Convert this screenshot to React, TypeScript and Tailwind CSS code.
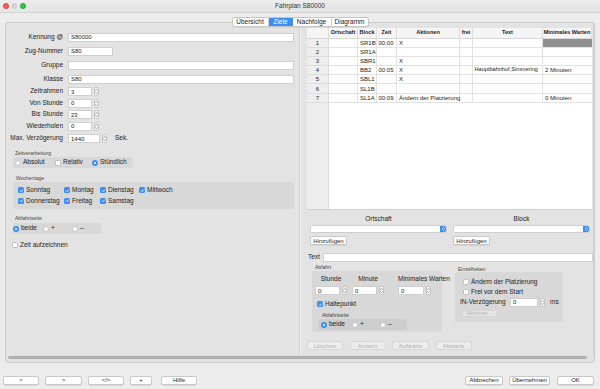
import React from 'react';

function Field({ w, value }: { w: string; value?: string }) {
  return (
    <div className={`h-[9px] bg-white border border-[#cfcfcf] flex items-center px-[2px] text-[6px] leading-none ${w}`}>
      {value}
    </div>
  );
}

function Stepper() {
  return (
    <div className="ml-[2px] w-[5px] h-[9px] bg-white border border-[#c4c4c4] rounded-[2px] flex flex-col items-center justify-center gap-[1px]">
      <svg width="3" height="2" viewBox="0 0 3 2">
        <path d="M0.2 1.8 L1.5 0.3 L2.8 1.8" fill="none" stroke="#666" strokeWidth="0.6" />
      </svg>
      <svg width="3" height="2" viewBox="0 0 3 2">
        <path d="M0.2 0.2 L1.5 1.7 L2.8 0.2" fill="none" stroke="#666" strokeWidth="0.6" />
      </svg>
    </div>
  );
}

function Check({ on, label }: { on?: boolean; label: string }) {
  return (
    <div className="flex items-center gap-[2px] whitespace-nowrap">
      {on ? (
        <div className="w-[6px] h-[6px] rounded-[1.5px] bg-[#3a8ef6] flex items-center justify-center">
          <svg width="5" height="5" viewBox="0 0 10 10">
            <path d="M2 5.2 L4.2 7.4 L8 2.8" fill="none" stroke="white" strokeWidth="1.6" />
          </svg>
        </div>
      ) : (
        <div className="w-[6px] h-[6px] rounded-[1.5px] bg-white border border-[#bdbdbd]" />
      )}
      <span>{label}</span>
    </div>
  );
}

function Radio({ on, label }: { on?: boolean; label: string }) {
  return (
    <div className="flex items-center gap-[2px] whitespace-nowrap">
      {on ? (
        <div className="w-[6px] h-[6px] rounded-full bg-[#3a8ef6] flex items-center justify-center">
          <div className="w-[2px] h-[2px] rounded-full bg-white" />
        </div>
      ) : (
        <div className="w-[6px] h-[6px] rounded-full bg-white border border-[#c4c4c4]" />
      )}
      <span>{label}</span>
    </div>
  );
}

function Btn({ label, w, disabled }: { label: string; w: string; disabled?: boolean }) {
  return (
    <div
      className={`h-[9px] flex items-center justify-center rounded-[2px] border text-[6px] leading-none ${w} ${
        disabled ? 'bg-[#ececec] border-[#d6d6d6] text-[#b2b2b2]' : 'bg-white border-[#c9c9c9] text-[#222] shadow-[0_0.5px_0.5px_rgba(0,0,0,0.15)]'
      }`}
    >
      {label}
    </div>
  );
}

function Combo() {
  return (
    <div className="h-[8px] flex-1 bg-white border border-[#cfcfcf] rounded-[1.5px] flex justify-end">
      <div className="w-[6px] h-full bg-[#3a8ef6] rounded-r-[1.5px] flex flex-col items-center justify-center gap-[0.5px]">
        <svg width="3" height="2" viewBox="0 0 3 2">
          <path d="M0.2 1.8 L1.5 0.3 L2.8 1.8" fill="none" stroke="white" strokeWidth="0.6" />
        </svg>
        <svg width="3" height="2" viewBox="0 0 3 2">
          <path d="M0.2 0.2 L1.5 1.7 L2.8 0.2" fill="none" stroke="white" strokeWidth="0.6" />
        </svg>
      </div>
    </div>
  );
}

function Row({ label, h, children }: { label: string; h: string; children: React.ReactNode }) {
  return (
    <div className={`flex items-center ${h}`}>
      <div className="w-[56px] flex justify-end whitespace-nowrap">{label}</div>
      <div className="ml-[5px] flex-1 flex items-center">{children}</div>
    </div>
  );
}

const rows = [
  { n: '1', block: 'SR1B', zeit: '00:00', akt: 'X', text: '', warten: '', sel: true },
  { n: '2', block: 'SR1A', zeit: '', akt: '', text: '', warten: '' },
  { n: '3', block: 'SBR1', zeit: '', akt: 'X', text: '', warten: '' },
  { n: '4', block: 'BB2', zeit: '00:05', akt: 'X', text: 'Hauptbahnhof,Simmering', warten: '2 Minuten' },
  { n: '5', block: 'SBL1', zeit: '', akt: 'X', text: '', warten: '' },
  { n: '6', block: 'SL1B', zeit: '', akt: '', text: '', warten: '' },
  { n: '7', block: 'SL1A', zeit: '00:09', akt: 'Ändern der Platzierung', text: '', warten: '0 Minuten' },
];

const cols = 'grid grid-cols-[22px_29px_19px_20px_63px_13px_70px_49px]';

function Table() {
  return (
    <div className="w-[285px] h-[182px] bg-white border-b border-[#cfcfcf] flex flex-col relative">
      <div className={`${cols} h-[10.5px] bg-[#f5f5f5] border-b border-[#d8d8d8] font-semibold text-[5.5px]`}>
        {['', 'Ortschaft', 'Block', 'Zeit', 'Aktionen', 'frei', 'Text', 'Minimales Warten'].map((c, i) => (
          <div key={i} className="flex items-center justify-center border-r border-[#dcdcdc] whitespace-nowrap overflow-hidden">
            {c}
          </div>
        ))}
      </div>
      {rows.map((r) => (
        <div key={r.n} className={`${cols} h-[9.2px] text-[6px]`}>
          <div className="flex items-center justify-center bg-[#eeeeee] border-r border-b border-[#dcdcdc]">{r.n}</div>
          <div className="border-r border-b border-[#e2e2e2]" />
          <div className="flex items-center px-[2px] border-r border-b border-[#e2e2e2]">{r.block}</div>
          <div className="flex items-center px-[1.5px] border-r border-b border-[#e2e2e2]">{r.zeit}</div>
          <div className="flex items-center px-[2px] border-r border-b border-[#e2e2e2] whitespace-nowrap">{r.akt}</div>
          <div className="border-r border-b border-[#e2e2e2]" />
          <div className="flex items-center px-[1.5px] border-r border-b border-[#e2e2e2] whitespace-nowrap overflow-hidden text-[5.6px]">{r.text}</div>
          <div className={`flex items-center px-[2px] border-b border-[#e2e2e2] whitespace-nowrap ${r.sel ? 'bg-[#8f8f8f]' : ''}`}>{r.warten}</div>
        </div>
      ))}
      <div className="flex-1 flex">
        <div className="w-[22px] bg-[#eeeeee] border-r border-[#dcdcdc]" />
        <div className="flex-1" />
      </div>
    </div>
  );
}

export default function App() {
  return (
    <div className="w-[600px] h-[389px] bg-[#ececec] flex flex-col overflow-hidden text-[6.5px] leading-none text-[#222] font-['Liberation_Sans',Arial,sans-serif]">
      {/* title bar */}
      <div className="h-[13px] relative flex items-center bg-gradient-to-b from-[#ededed] to-[#e4e4e4] border-b border-[#d3d3d3]">
        <div className="flex items-center gap-[3px] pl-[3px]">
          <div className="w-[5.5px] h-[5.5px] rounded-full bg-[#fc5f58] border-[0.5px] border-[#e0443e]" />
          <div className="w-[5.5px] h-[5.5px] rounded-full bg-[#d6d6d6] border-[0.5px] border-[#c6c6c6]" />
          <div className="w-[5.5px] h-[5.5px] rounded-full bg-[#2ec842] border-[0.5px] border-[#1dac2c]" />
        </div>
        <div className="absolute inset-0 flex items-center justify-center text-[6.5px] text-[#333]">Fahrplan S80000</div>
      </div>

      {/* tabs */}
      <div className="mt-[4px] h-[10px] flex justify-center relative z-10">
        <div className="flex h-full bg-white border border-[#c6c6c6] rounded-[2.5px] overflow-hidden text-[6.5px] shadow-[0_0.5px_0.5px_rgba(0,0,0,0.1)]">
          <div className="w-[36px] flex items-center justify-center border-r border-[#d4d4d4]">Übersicht</div>
          <div className="w-[24px] flex items-center justify-center bg-[#3b8ef5] text-white">Ziele</div>
          <div className="w-[39px] flex items-center justify-center border-r border-[#d4d4d4]">Nachfolge</div>
          <div className="w-[36px] flex items-center justify-center">Diagramm</div>
        </div>
      </div>

      {/* tab box */}
      <div className="-mt-[5px] mx-[5px] h-[341px] border border-[#cbcbcb] rounded-[3px] bg-[#e3e3e3] flex flex-col">
        <div className="flex-1 flex">
          {/* left pane */}
          <div className="w-[291px] pl-[1px] pr-[3px] pt-[7px] flex flex-col">
            <Row label="Kennung @" h="h-[14px]"><Field w="flex-1" value="S80000" /></Row>
            <Row label="Zug-Nummer" h="h-[14px]"><Field w="w-[45px]" value="S80" /></Row>
            <Row label="Gruppe" h="h-[14px]"><Field w="flex-1" /></Row>
            <Row label="Klasse" h="h-[14px]"><Field w="flex-1" value="S80" /></Row>
            <Row label="Zeitrahmen" h="h-[11px]"><Field w="w-[24px]" value="3" /><Stepper /></Row>
            <Row label="Von Stunde" h="h-[12px]"><Field w="w-[24px]" value="0" /><Stepper /></Row>
            <Row label="Bis Stunde" h="h-[11px]"><Field w="w-[24px]" value="23" /><Stepper /></Row>
            <Row label="Wiederholen" h="h-[12px]"><Field w="w-[24px]" value="0" /><Stepper /></Row>
            <Row label="Max. Verzögerung" h="h-[13px]">
              <Field w="w-[32px]" value="1440" />
              <Stepper />
              <span className="ml-[8px]">Sek.</span>
            </Row>

            <div className="mt-[5px] h-[6px] pl-[8px] text-[5px] text-[#444] flex items-center">Zeitverarbeitung</div>
            <div className="mt-[1px] ml-[6px] w-[120px] h-[11px] bg-[#d8d8d8] rounded-[2px] flex items-center pl-[2px]">
              <div className="w-[40px]"><Radio label="Absolut" /></div>
              <div className="w-[37px]"><Check label="Relativ" /></div>
              <Radio on label="Stündlich" />
            </div>

            <div className="mt-[7px] h-[6px] pl-[9px] text-[5px] text-[#444] flex items-center">Wochentage</div>
            <div className="mt-[1px] ml-[6px] h-[27px] bg-[#d8d8d8] rounded-[2px] flex flex-col justify-center gap-[4px] pl-[5px]">
              <div className="grid grid-cols-[46px_36px_39px_60px]">
                <Check on label="Sonntag" />
                <Check on label="Montag" />
                <Check on label="Dienstag" />
                <Check on label="Mittwoch" />
              </div>
              <div className="grid grid-cols-[46px_36px_39px_60px]">
                <Check on label="Donnerstag" />
                <Check on label="Freitag" />
                <Check on label="Samstag" />
              </div>
            </div>

            <div className="mt-[6px] h-[6px] pl-[8px] text-[5px] text-[#444] flex items-center">Abfahrtseite</div>
            <div className="mt-[2px] ml-[6px] w-[88px] h-[11px] bg-[#d8d8d8] rounded-[2px] flex items-center">
              <div className="w-[30px]"><Radio on label="beide" /></div>
              <div className="w-[29px]"><Radio label="+" /></div>
              <Radio label="–" />
            </div>

            <div className="mt-[7px] h-[8px] pl-[5px] flex items-center">
              <Check label="Zeit aufzeichnen" />
            </div>
          </div>

          {/* divider */}
          <div className="w-[6px] flex justify-center">
            <div className="w-[2px] h-full bg-[#f0f0f0] border-l border-[#d2d2d2]" />
          </div>

          {/* right pane */}
          <div className="flex-1 pl-[4px] pt-[5px] border-r border-[#d2d2d2] flex flex-col">
            <Table />

            <div className="mt-[5px] flex gap-[6px] pl-[3px] w-[283px]">
              <div className="flex-1 flex flex-col">
                <div className="h-[8px] flex items-center justify-center">Ortschaft</div>
                <div className="mt-[2px] flex"><Combo /></div>
                <div className="mt-[3px]"><Btn label="Hinzufügen" w="w-[37px]" /></div>
              </div>
              <div className="flex-1 flex flex-col">
                <div className="h-[8px] flex items-center justify-center">Block</div>
                <div className="mt-[2px] flex"><Combo /></div>
                <div className="mt-[3px]"><Btn label="Hinzufügen" w="w-[37px]" /></div>
              </div>
            </div>

            <div className="mt-[8px] flex items-center pl-[1px] w-[286px]">
              <span className="w-[15px]">Text</span>
              <Field w="flex-1" />
            </div>

            <div className="flex mt-[2px] pl-[5px]">
              <div className="flex flex-col">
                <div className="h-[6px] pl-[3px] text-[5px] text-[#444] flex items-center">Abfahrt</div>
                <div className="mt-[1px] w-[130px] h-[61px] bg-[#d8d8d8] rounded-[2px] pl-[3px] pt-[4px] flex flex-col">
                  <div className="flex h-[8px] items-center">
                    <div className="w-[32px] text-center">Stunde</div>
                    <div className="w-[32px] ml-[5px] text-center">Minute</div>
                    <div className="w-[33px] ml-[14px] text-center whitespace-nowrap">Minimales Warten</div>
                  </div>
                  <div className="flex mt-[3px]">
                    <div className="w-[32px] flex"><Field w="w-[25px]" value="0" /><Stepper /></div>
                    <div className="w-[32px] ml-[5px] flex"><Field w="w-[25px]" value="0" /><Stepper /></div>
                    <div className="w-[33px] ml-[14px] flex"><Field w="w-[26px]" value="0" /><Stepper /></div>
                  </div>
                  <div className="mt-[5px] h-[8px] pl-[2px] flex items-center"><Check on label="Haltepunkt" /></div>
                  <div className="mt-[4px] h-[6px] pl-[7px] text-[5px] text-[#444] flex items-center">Abfahrtseite</div>
                  <div className="mt-[1px] ml-[3px] w-[89px] h-[11px] bg-[#cdcdcd] rounded-[2px] flex items-center pl-[3px]">
                    <div className="w-[31px]"><Radio on label="beide" /></div>
                    <div className="w-[28px]"><Radio label="+" /></div>
                    <Radio label="–" />
                  </div>
                </div>
              </div>

              <div className="flex flex-col ml-[13px] pt-[2px]">
                <div className="h-[6px] pl-[3px] text-[5px] text-[#444] flex items-center">Einzelheiten</div>
                <div className="w-[108px] h-[50px] bg-[#d8d8d8] rounded-[2px] flex flex-col">
                  <div className="mt-[6px] h-[8px] pl-[8px] flex items-center"><Check label="Ändern der Platzierung" /></div>
                  <div className="mt-[2px] h-[8px] pl-[8px] flex items-center"><Check label="Frei vor dem Start" /></div>
                  <div className="mt-[1.5px] h-[9px] pl-[5px] flex items-center">
                    <span className="w-[50px] whitespace-nowrap">IN-Verzögerung</span>
                    <Field w="w-[28px]" value="0" />
                    <Stepper />
                    <span className="ml-[5px]">ms</span>
                  </div>
                  <div className="mt-[3.5px] pl-[7px]">
                    <div className="w-[35px] h-[7px] bg-[#e6e6e6] border border-[#d6d6d6] rounded-[1.5px] text-[#b2b2b2] text-[5.5px] flex items-center justify-center">Aktionen...</div>
                  </div>
                </div>
              </div>
            </div>

            <div className="mt-[9px] flex gap-[6.5px]">
              <Btn disabled label="Löschen" w="w-[36px]" />
              <Btn disabled label="Ändern" w="w-[36px]" />
              <Btn disabled label="Aufwärts" w="w-[37px]" />
              <Btn disabled label="Abwärts" w="w-[36px]" />
            </div>
          </div>
        </div>
        <div className="ml-[2px] mb-[3px] w-[579px] h-[3px] rounded-full bg-[#b8b8b8] border-[0.5px] border-[#a9a9a9]" />
      </div>

      {/* bottom buttons */}
      <div className="mt-[12.5px] flex items-center pl-[3px] pr-[6px]">
        <Btn label="<" w="w-[36px]" />
        <div className="ml-[6px]"><Btn label=">" w="w-[37px]" /></div>
        <div className="ml-[6px]"><Btn label="</>" w="w-[36px]" /></div>
        <div className="ml-[6px]"><Btn label="+" w="w-[22px]" /></div>
        <div className="ml-[9px]"><Btn label="Hilfe" w="w-[36px]" /></div>
        <div className="flex-1" />
        <Btn label="Abbrechen" w="w-[38px]" />
        <div className="ml-[6px]"><Btn label="Übernehmen" w="w-[41px]" /></div>
        <div className="ml-[7px]"><Btn label="OK" w="w-[37px]" /></div>
      </div>
    </div>
  );
}
